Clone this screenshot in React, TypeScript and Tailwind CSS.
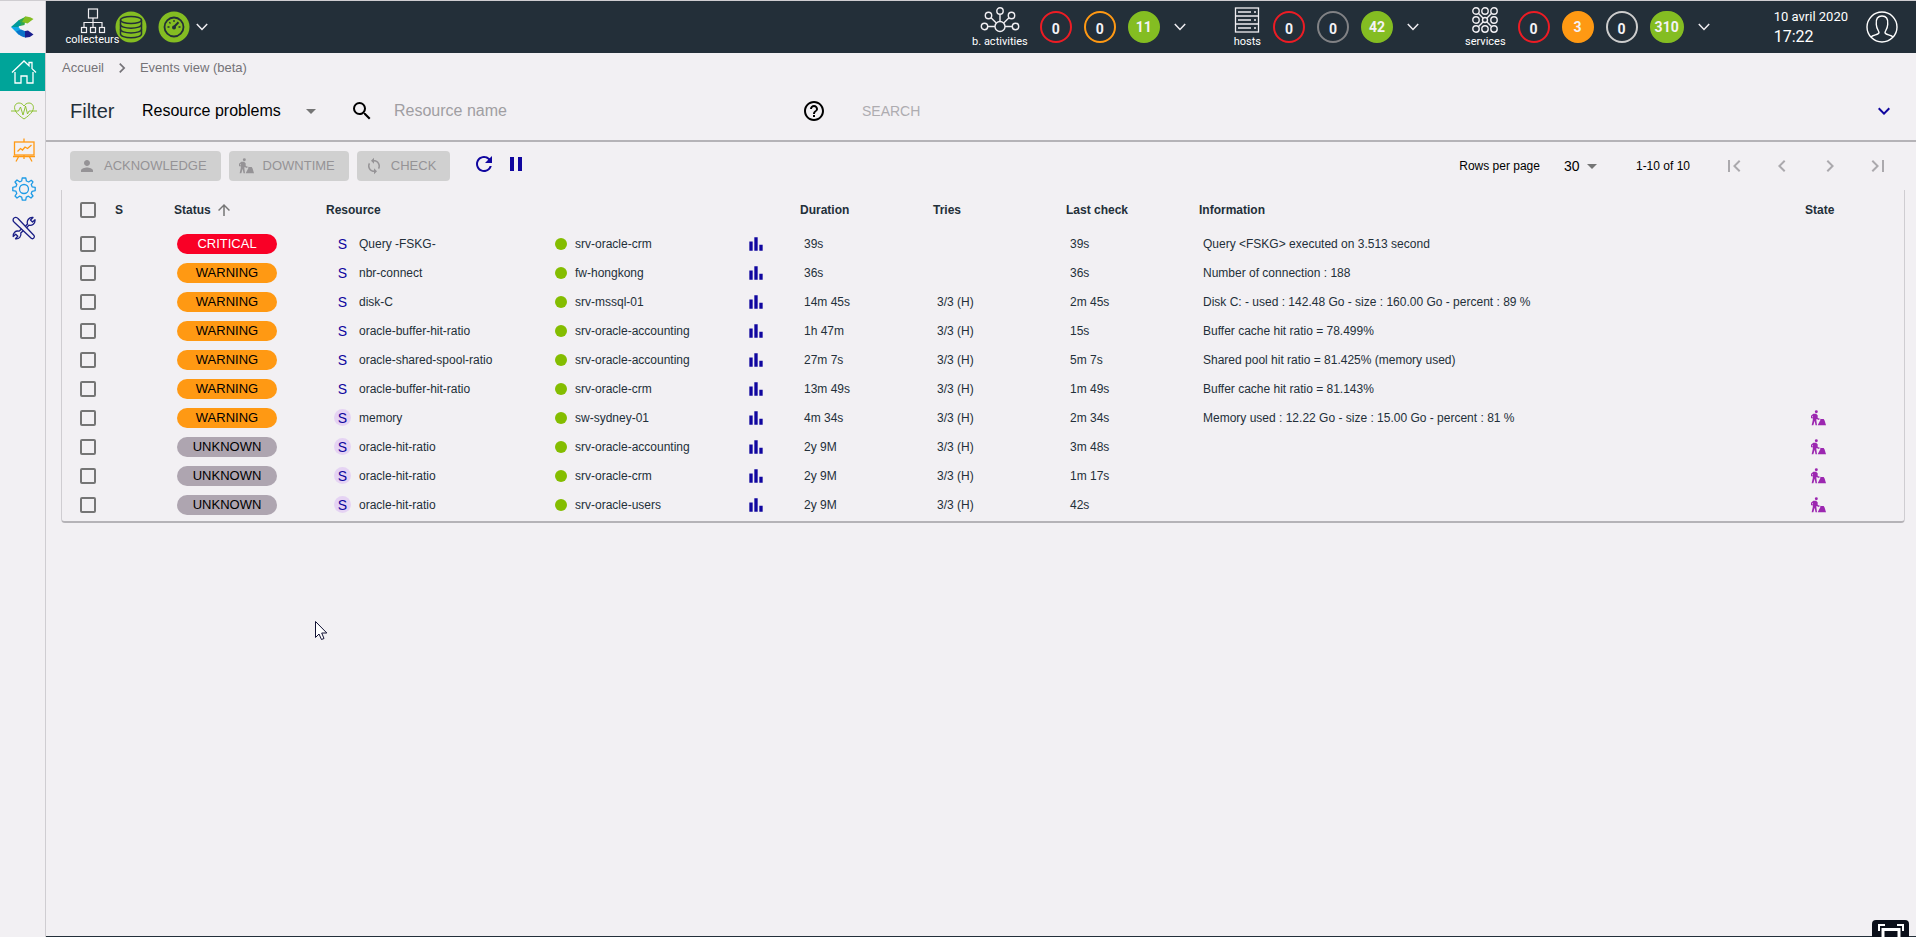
import type { ReactNode } from "react";
import {
  MdArrowDropDown,
  MdArrowUpward,
  MdBarChart,
  MdChevronLeft,
  MdChevronRight,
  MdExpandMore,
  MdFirstPage,
  MdHelpOutline,
  MdLastPage,
  MdPause,
  MdPerson,
  MdRefresh,
  MdSearch,
  MdSync,
} from "react-icons/md";

type Status = "CRITICAL" | "WARNING" | "UNKNOWN";

type EventRow = {
  status: Status;
  name: string;
  host: string;
  duration: string;
  tries: string;
  lastCheck: string;
  info: string;
  downtime?: boolean;
};

const rows: EventRow[] = [
  { status: "CRITICAL", name: "Query -FSKG-", host: "srv-oracle-crm", duration: "39s", tries: "", lastCheck: "39s", info: "Query <FSKG> executed on 3.513 second" },
  { status: "WARNING", name: "nbr-connect", host: "fw-hongkong", duration: "36s", tries: "", lastCheck: "36s", info: "Number of connection : 188" },
  { status: "WARNING", name: "disk-C", host: "srv-mssql-01", duration: "14m 45s", tries: "3/3 (H)", lastCheck: "2m 45s", info: "Disk C: - used : 142.48 Go - size : 160.00 Go - percent : 89 %" },
  { status: "WARNING", name: "oracle-buffer-hit-ratio", host: "srv-oracle-accounting", duration: "1h 47m", tries: "3/3 (H)", lastCheck: "15s", info: "Buffer cache hit ratio = 78.499%" },
  { status: "WARNING", name: "oracle-shared-spool-ratio", host: "srv-oracle-accounting", duration: "27m 7s", tries: "3/3 (H)", lastCheck: "5m 7s", info: "Shared pool hit ratio = 81.425% (memory used)" },
  { status: "WARNING", name: "oracle-buffer-hit-ratio", host: "srv-oracle-crm", duration: "13m 49s", tries: "3/3 (H)", lastCheck: "1m 49s", info: "Buffer cache hit ratio = 81.143%" },
  { status: "WARNING", name: "memory", host: "sw-sydney-01", duration: "4m 34s", tries: "3/3 (H)", lastCheck: "2m 34s", info: "Memory used : 12.22 Go - size : 15.00 Go - percent : 81 %", downtime: true },
  { status: "UNKNOWN", name: "oracle-hit-ratio", host: "srv-oracle-accounting", duration: "2y 9M", tries: "3/3 (H)", lastCheck: "3m 48s", info: "", downtime: true },
  { status: "UNKNOWN", name: "oracle-hit-ratio", host: "srv-oracle-crm", duration: "2y 9M", tries: "3/3 (H)", lastCheck: "1m 17s", info: "", downtime: true },
  { status: "UNKNOWN", name: "oracle-hit-ratio", host: "srv-oracle-users", duration: "2y 9M", tries: "3/3 (H)", lastCheck: "42s", info: "", downtime: true },
];

const pillColors: Record<Status, string> = {
  CRITICAL: "bg-[#f90026] text-white",
  WARNING: "bg-[#ff9913] text-black",
  UNKNOWN: "bg-[#aea5b0] text-black",
};

const checkboxClass =
  "block h-4 w-4 appearance-none rounded-xs border-2 border-[#757575] bg-transparent";

/* ---------- icons ---------- */

function Logo() {
  return (
    <svg viewBox="0 0 24 22" className="h-[22px] w-6">
      <path d="M8 4 L15 0.5 L13.5 9 L9 10 L4 9 Z" fill="#2fa84f" />
      <path d="M0 11 L8 4 L10 8 L7.5 11 Z" fill="#009a9a" />
      <path d="M14 0.5 Q19 0 22.5 3 L16.5 7.5 L11 6 Z" fill="#84bd22" />
      <path d="M0 11 H7.5 L11 15.5 L8 19 Z" fill="#0fa6e6" />
      <path d="M5 15.5 L10 13.5 L15 15.5 L15 21.5 Q9 21 5 15.5 Z" fill="#0a73c9" />
      <path d="M14 15 L17 14.5 L22.5 18.5 Q19 22 14 21.5 Z" fill="#1a1f8f" />
    </svg>
  );
}

function HomeIcon() {
  return (
    <svg viewBox="0 0 26 26" className="h-[26px] w-[26px]" fill="none" stroke="#fff" strokeWidth="1.3">
      <path d="M1 13.5 L13 2 L18 6.800 V3.500 H21 V9.600 L25 13.500" />
      <path d="M4 13 V24 H10 V17 H16 V24 H22 V13" />
    </svg>
  );
}

function HeartIcon() {
  return (
    <svg viewBox="0 0 26 20" className="h-5 w-[26px]" fill="none" stroke="#84bd22" strokeWidth="0.9">
      <path d="M4.500 10 C2 5 5 2 8 2 C10.500 2 12 3.500 13 5 C14 3.500 15.500 2 18 2 C21 2 24 5 21.500 10 C19.500 13.500 16 16 13 18 C10 16 6.500 13.500 4.500 10 Z" />
      <path d="M0 10 H7.500 L9.500 6 L12 14 L14.500 5 L16.500 13 L18 10 H26" />
    </svg>
  );
}

function BoardIcon() {
  return (
    <svg viewBox="0 0 24 24" className="h-6 w-6" fill="none" stroke="#ff9913" strokeWidth="1.3">
      <rect x="2.500" y="4" width="19.500" height="13" />
      <path d="M12 0.500 V4 M1 18.500 H23 M7 18 L4 23.500 M17 18 L20 23.500 M12 17 V21" />
      <path d="M5.500 13.500 L8.500 10.500 L10.500 12 L13 9 L15.500 10.500 L19.500 7" />
    </svg>
  );
}

function GearIcon() {
  return (
    <svg viewBox="0 0 24 24" className="h-6 w-6" fill="none" stroke="#1e9be6" strokeWidth="1.3" strokeLinejoin="round">
      <circle cx="12" cy="12" r="4.500" />
      <path d="M10.200 1 H13.800 L14.400 4 L16.700 5 L19.300 3.300 L21 5 L19.200 7.600 L20.100 9.800 L23.200 10.300 V13.700 L20.100 14.300 L19.200 16.500 L21 19 L19 21 L16.400 19.200 L14.300 20.100 L13.700 23.200 H10.300 L9.700 20.100 L7.500 19.200 L5 21 L3 19 L4.800 16.400 L3.900 14.200 L0.800 13.700 V10.300 L3.900 9.700 L4.800 7.500 L3 5 L5 3 L7.600 4.800 L9.700 4 Z" />
    </svg>
  );
}

function ToolsIcon() {
  return (
    <svg viewBox="0 0 24 24" className="h-6 w-6" fill="none" stroke="#1b1f86" strokeWidth="1.3" strokeLinejoin="round">
      <path d="M1.500 2.500 C2.500 0.800 5 1 6 2.500 L22 19.500 C23 21 21.500 23.500 19.500 22.500 L2.500 6.500 C1 5.500 0.800 4 1.500 2.500 Z" />
      <path d="M13.500 10 L15.500 8 C14.500 4.500 17 1 21 1.500 L18.500 4 L20.500 6 L23 3.800 C23.500 7.500 20 10 16.800 9.200 L15 11.500" />
      <path d="M9.500 13 L7 15.200 C3.500 14.300 0.800 17 1.200 20.500 L3.700 18.200 L5.800 20.300 L3.500 22.800 C7 23.200 9.700 20.500 8.800 17 L11.200 14.800" />
    </svg>
  );
}

function PollerIcon() {
  return (
    <svg viewBox="0 0 26 26" className="h-[26px] w-[26px]" fill="none" stroke="#f0eef2" strokeWidth="1.2">
      <rect x="8.500" y="1" width="9" height="9" />
      <path d="M13 10 V19.500 M4 19.500 V14.500 H22 V19.500" />
      <rect x="1.500" y="19.500" width="5" height="5" />
      <rect x="10.500" y="19.500" width="5" height="5" />
      <rect x="19.500" y="19.500" width="5" height="5" />
    </svg>
  );
}

function ActivitiesIcon() {
  return (
    <svg viewBox="0 0 40 26" className="h-[26px] w-10" fill="none" stroke="#f0eef2" strokeWidth="1.4">
      <circle cx="20" cy="19.500" r="5" />
      <circle cx="20" cy="4" r="3.200" />
      <circle cx="8.500" cy="8.500" r="3.200" />
      <circle cx="31.500" cy="8.500" r="3.200" />
      <circle cx="4.500" cy="19.500" r="3.200" />
      <circle cx="35.500" cy="19.500" r="3.200" />
      <path d="M20 7.200 V14.500 M11 10.800 L16.300 16 M29 10.800 L23.700 16 M7.700 19.500 H15 M25 19.500 H32.300" />
    </svg>
  );
}

function HostsIcon() {
  return (
    <svg viewBox="0 0 26 26" className="h-[26px] w-[26px]" fill="none" stroke="#f0eef2" strokeWidth="1.3">
      <rect x="1.500" y="1" width="23" height="24" />
      <path d="M1.500 9 H24.500 M1.500 17 H24.500 M4 5 H17 M4 13 H17 M4 21 H17 M20 5 H22 M20 13 H22 M20 21 H22" />
    </svg>
  );
}

function ServicesIcon() {
  const points = [4, 13, 22];
  return (
    <svg viewBox="0 0 26 26" className="h-[26px] w-[26px]" fill="none" stroke="#f0eef2" strokeWidth="1.4">
      {points.map((cy) => points.map((cx) => <circle key={`${cx}-${cy}`} cx={cx} cy={cy} r={cx === 13 && cy === 13 ? 2.5 : 3.2} />))}
      <path d="M6.300 6.300 L11 11 M19.700 6.300 L15 11 M6.300 19.700 L11 15 M19.700 19.700 L15 15" />
    </svg>
  );
}

function DatabaseIcon() {
  return (
    <svg viewBox="0 0 32 32" className="h-8 w-8">
      <circle cx="16" cy="16" r="15.500" fill="#84bd22" />
      <g fill="none" stroke="#232f39" strokeWidth="1.500">
        <ellipse cx="16" cy="9" rx="10.500" ry="3.500" />
        <path d="M5.500 9 V23 C5.500 25 10 26.800 16 26.800 S26.500 25 26.500 23 V9" />
        <path d="M5.500 13.500 C5.500 15.500 10 17.200 16 17.200 S26.500 15.500 26.500 13.500 M5.500 18.300 C5.500 20.300 10 22 16 22 S26.500 20.300 26.500 18.300" />
      </g>
    </svg>
  );
}

function LatencyIcon() {
  return (
    <svg viewBox="0 0 32 32" className="h-8 w-8">
      <circle cx="16" cy="16" r="15.500" fill="#84bd22" />
      <g fill="none" stroke="#232f39">
        <circle cx="16" cy="16" r="9.500" strokeWidth="1.800" />
        <path d="M16 9 V11 M9.500 16 H11.500 M11.300 11.300 L12.500 12.500 M22.500 16 H20.500" strokeWidth="1.300" />
        <path d="M16 16 L20.500 11.200" strokeWidth="2" />
      </g>
      <circle cx="16" cy="16.500" r="2" fill="#232f39" />
    </svg>
  );
}

function UserIcon() {
  return (
    <svg viewBox="0 0 32 32" className="h-8 w-8" fill="none" stroke="#fff" strokeWidth="1.400">
      <circle cx="16" cy="16" r="15" />
      <path d="M5 26 C7 23.500 13 24 13 21.500 C13 20 10.500 18 10.300 13.500 C9.500 7.500 12 5 16 5 S22.500 7.500 21.700 13.500 C21.500 18 19 20 19 21.500 C19 24 25 23.500 27 26" />
    </svg>
  );
}

function DowntimeIcon({ className }: { className: string }) {
  return (
    <svg viewBox="0 0 24 24" className={className} fill="currentColor">
      <circle cx="9.500" cy="2.700" r="2.200" />
      <path d="M5 5.500 L9 5.500 L11.500 8 V12 L13.500 13.500 V15 L9.800 13.500 L9.500 15 L10.500 23 H8.300 L7 16 L5 23 H2.500 L4.200 15 V12.500 H1.500 V8.500 Z M4.300 8.500 L3.300 9.500 V11 L4.300 11.300 Z" fillRule="evenodd" />
      <path d="M11.500 23 L15 16 L16.500 13.500 H20.500 L22 16 L24 23 Z" />
      <path d="M10 12 L17 14.500" stroke="currentColor" strokeWidth="1" />
    </svg>
  );
}

function HeaderChevron() {
  return (
    <button type="button" aria-label="Show details" className="flex w-3 justify-center">
      <svg viewBox="0 0 12 8" className="h-2 w-3" fill="none" stroke="#f0eef2" strokeWidth="1.500">
        <path d="M0.800 1 L6 6.500 L11.200 1" />
      </svg>
    </button>
  );
}

/* ---------- header ---------- */

function Counter({ value, className }: { value: number; className: string }) {
  return (
    <a href="#counter" className={`flex h-8 min-w-8 items-center justify-center rounded-full border-2 text-sm leading-5 font-bold text-[#f4f2f6] ${className}`}>
      {value}
    </a>
  );
}

function HeaderGroup({ icon, label, children }: { icon: ReactNode; label: string; children: ReactNode }) {
  return (
    <div className="flex items-center">
      <div className="flex flex-col items-center gap-[3px] whitespace-nowrap text-[11px] leading-3">
        {icon}
        {label}
      </div>
      <div className="ml-3 flex items-center gap-3">{children}</div>
      <div className="ml-[14px] flex">
        <HeaderChevron />
      </div>
    </div>
  );
}

function Header() {
  return (
    <header className="flex h-[52px] items-center bg-[#232f39] pl-5 pr-[18px] font-[Roboto,sans-serif] text-white">
      <div className="flex items-center">
        <div className="flex w-[53px] flex-col items-center text-[11px] leading-3">
          <PollerIcon />
          collecteurs
        </div>
        <div className="-ml-1 flex gap-[11px]">
          <DatabaseIcon />
          <LatencyIcon />
        </div>
        <div className="ml-[6px] flex">
          <HeaderChevron />
        </div>
      </div>
      <div className="ml-auto flex items-center">
        <HeaderGroup icon={<ActivitiesIcon />} label="b. activities">
          <Counter value={0} className="border-[#ed1c24] pt-1" />
          <Counter value={0} className="border-[#ff9913] pt-1" />
          <Counter value={11} className="border-[#84bd22] bg-[#84bd22]" />
        </HeaderGroup>
        <div className="ml-12">
          <HeaderGroup icon={<HostsIcon />} label="hosts">
            <Counter value={0} className="border-[#ed1c24] pt-1" />
            <Counter value={0} className="border-[#818285] pt-1" />
            <Counter value={42} className="border-[#84bd22] bg-[#84bd22]" />
          </HeaderGroup>
        </div>
        <div className="ml-[46px]">
          <HeaderGroup icon={<ServicesIcon />} label="services">
            <Counter value={0} className="border-[#ed1c24] pt-1" />
            <Counter value={3} className="border-[#ff9913] bg-[#ff9913]" />
            <Counter value={0} className="border-[#cdcdcd] pt-1" />
            <Counter value={310} className="border-[#84bd22] bg-[#84bd22] px-[3px]" />
          </HeaderGroup>
        </div>
        <div className="ml-16 flex flex-col text-[13px] leading-5">
          <span>10 avril 2020</span>
          <span className="text-base leading-5">17:22</span>
        </div>
        <button type="button" aria-label="User profile" className="ml-[18px]">
          <UserIcon />
        </button>
      </div>
    </header>
  );
}

/* ---------- sidebar ---------- */

function Sidebar() {
  return (
    <nav className="flex w-[46px] shrink-0 flex-col border-r border-[#cfcdd1]">
      <a href="#top" aria-label="Centreon" className="flex h-[52px] items-center justify-center">
        <Logo />
      </a>
      <a href="#home" aria-label="Home" className="flex h-[38px] items-center justify-center bg-[#00a499] pl-[3px]">
        <HomeIcon />
      </a>
      <a href="#monitoring" aria-label="Monitoring" className="flex h-[39px] items-center justify-center pl-[3px]">
        <HeartIcon />
      </a>
      <a href="#reporting" aria-label="Reporting" className="flex h-[39px] items-center justify-center pl-[3px]">
        <BoardIcon />
      </a>
      <a href="#configuration" aria-label="Configuration" className="flex h-[39px] items-center justify-center pl-[3px]">
        <GearIcon />
      </a>
      <a href="#administration" aria-label="Administration" className="flex h-[39px] items-center justify-center pl-[3px]">
        <ToolsIcon />
      </a>
    </nav>
  );
}

/* ---------- content ---------- */

function FilterBar() {
  return (
    <section className="flex h-[60px] items-center border-b-2 border-[#b5b3b7] pl-6 pr-5">
      <h1 className="w-[72px] text-xl leading-6 text-[#232f39]">Filter</h1>
      <div className="relative flex w-[181px] items-center">
        <select aria-label="Filter" className="w-full appearance-none bg-transparent text-base text-black">
          <option>Resource problems</option>
        </select>
        <MdArrowDropDown className="pointer-events-none absolute right-0 h-6 w-6 text-[#757575]" />
      </div>
      <MdSearch className="ml-[27px] h-6 w-6 text-black" />
      <input
        type="text"
        aria-label="Resource name"
        placeholder="Resource name"
        className="ml-5 w-[408px] bg-transparent text-base placeholder:text-[#a09ea2]"
      />
      <button type="button" aria-label="Search help">
        <MdHelpOutline className="h-6 w-6 text-black" />
      </button>
      <button type="button" disabled className="ml-9 text-sm text-[#aeacb0]">
        SEARCH
      </button>
      <button type="button" aria-label="Expand filters" className="ml-auto">
        <MdExpandMore className="h-6 w-6 text-[#10069f]" />
      </button>
    </section>
  );
}

function ActionButton({ icon, children }: { icon: ReactNode; children: ReactNode }) {
  return (
    <button
      type="button"
      disabled
      className="flex h-[30px] items-center gap-2 rounded-sm bg-[#d0d0d0] pl-2 pr-[14px] text-[13px] text-[#959396]"
    >
      {icon}
      {children}
    </button>
  );
}

function Toolbar() {
  return (
    <section className="flex h-12 items-center pl-6 pr-[14px]">
      <div className="flex gap-2">
        <ActionButton icon={<MdPerson className="h-[18px] w-[18px]" />}>ACKNOWLEDGE</ActionButton>
        <ActionButton icon={<DowntimeIcon className="h-4 w-[18px]" />}>DOWNTIME</ActionButton>
        <ActionButton icon={<MdSync className="h-[18px] w-[18px]" />}>CHECK</ActionButton>
      </div>
      <div className="ml-[22px] flex gap-2 pb-1 text-[#10069f]">
        <button type="button" aria-label="Refresh">
          <MdRefresh className="h-6 w-6" />
        </button>
        <button type="button" aria-label="Pause autorefresh">
          <MdPause className="h-6 w-6" />
        </button>
      </div>
      <div className="ml-auto flex items-center text-xs text-black">
        <label htmlFor="rows-per-page">Rows per page</label>
        <div className="relative ml-6 flex w-10 items-center">
          <select id="rows-per-page" className="w-full appearance-none bg-transparent text-sm">
            <option>30</option>
          </select>
          <MdArrowDropDown className="pointer-events-none absolute right-0 h-6 w-6 text-[#757575]" />
        </div>
        <span className="ml-8">1-10 of 10</span>
        <div className="ml-5 flex text-[#aba9ad]">
          <button type="button" disabled aria-label="First page" className="px-3">
            <MdFirstPage className="h-6 w-6" />
          </button>
          <button type="button" disabled aria-label="Previous page" className="px-3">
            <MdChevronLeft className="h-6 w-6" />
          </button>
          <button type="button" disabled aria-label="Next page" className="px-3">
            <MdChevronRight className="h-6 w-6" />
          </button>
          <button type="button" disabled aria-label="Last page" className="px-3">
            <MdLastPage className="h-6 w-6" />
          </button>
        </div>
      </div>
    </section>
  );
}

function EventsTable() {
  return (
    <div className="ml-[15px] mr-[11px] rounded-b-sm border-x border-b-2 border-x-[#cfcdd1] border-b-[#b5b3b7] pb-0.5">
      <table className="w-full table-fixed text-left text-xs text-[#232f39]">
        <colgroup>
          <col className="w-[53px]" />
          <col className="w-[59px]" />
          <col className="w-[152px]" />
          <col className="w-[229px]" />
          <col className="w-[194px]" />
          <col className="w-[51px]" />
          <col className="w-[133px]" />
          <col className="w-[133px]" />
          <col className="w-[133px]" />
          <col />
          <col className="w-[99px]" />
        </colgroup>
        <thead>
          <tr className="h-[39px] font-bold">
            <th className="pl-[18px]">
              <input type="checkbox" aria-label="Select all" className={checkboxClass} />
            </th>
            <th>S</th>
            <th>
              <button type="button" className="flex items-center gap-1">
                Status
                <MdArrowUpward className="h-[18px] w-[18px] text-[#757575]" />
              </button>
            </th>
            <th colSpan={3}>Resource</th>
            <th>Duration</th>
            <th>Tries</th>
            <th>Last check</th>
            <th>Information</th>
            <th>State</th>
          </tr>
        </thead>
        <tbody>
          {rows.map((row, index) => (
            <tr key={index} className="h-[29px]">
              <td className="pl-[18px]">
                <input type="checkbox" aria-label={`Select ${row.name}`} className={checkboxClass} />
              </td>
              <td />
              <td className="pl-[3px]">
                <span className={`flex h-5 w-[100px] items-center justify-center rounded-full text-[13px] ${pillColors[row.status]}`}>
                  {row.status}
                </span>
              </td>
              <td>
                <div className="flex items-center gap-2 pl-2">
                  <span className={`flex h-[17px] w-[17px] items-center justify-center rounded-full text-sm leading-4 text-[#10069f] ${row.downtime ? "bg-[#e5d3f3]" : ""}`}>
                    S
                  </span>
                  {row.name}
                </div>
              </td>
              <td>
                <div className="flex items-center gap-2">
                  <span className="h-3 w-3 rounded-full bg-[#84bd00]" />
                  {row.host}
                </div>
              </td>
              <td>
                <button type="button" aria-label="Graph" className="-ml-[3px] block">
                  <MdBarChart className="h-5 w-5 text-[#10069f]" />
                </button>
              </td>
              <td className="pl-1">{row.duration}</td>
              <td className="pl-1">{row.tries}</td>
              <td className="pl-1">{row.lastCheck}</td>
              <td className="pl-1">{row.info}</td>
              <td className="pl-1">{row.downtime && <DowntimeIcon className="h-4 w-[18px] text-[#9c27b0]" />}</td>
            </tr>
          ))}
        </tbody>
      </table>
    </div>
  );
}

export default function App() {
  return (
    <div className="relative flex min-h-screen overflow-hidden border-t border-[#cfcdd1] bg-[#f2f0f3] font-['Liberation_Sans',Arial,sans-serif]">
      <Sidebar />
      <div className="flex min-w-0 grow flex-col border-b border-b-[#232f39]">
        <Header />
        <nav aria-label="Breadcrumb" className="flex h-[29px] items-center pl-4 text-[13px] text-[#757378]">
          <a href="#accueil">Accueil</a>
          <MdChevronRight className="mx-2 h-5 w-5" />
          <a href="#events">Events view (beta)</a>
        </nav>
        <main>
          <FilterBar />
          <Toolbar />
          <EventsTable />
        </main>
      </div>

      {/* mouse pointer */}
      <svg viewBox="0 0 13 20" className="pointer-events-none absolute left-[315px] top-[620px] h-5 w-[13px]" fill="#fff" stroke="#111133" strokeWidth="1">
        <path d="M0.500 0.500 V16.500 L4 13 L6.500 18.500 L9 17.500 L6.700 12 H11.800 Z" />
      </svg>

      {/* screen capture badge */}
      <div className="absolute bottom-0 right-[7px] flex h-[17px] w-[37px] justify-center overflow-hidden rounded-t-sm bg-[#0b0f19]">
        <svg viewBox="0 0 26 13" className="mt-1 h-[13px] w-[26px]" fill="none" stroke="#fff">
          <path d="M1 7 V1 H7 M19 1 H25 V7" strokeWidth="2" />
          <path d="M5 13 V5.500 H21 V13" strokeWidth="3" />
        </svg>
      </div>
    </div>
  );
}
